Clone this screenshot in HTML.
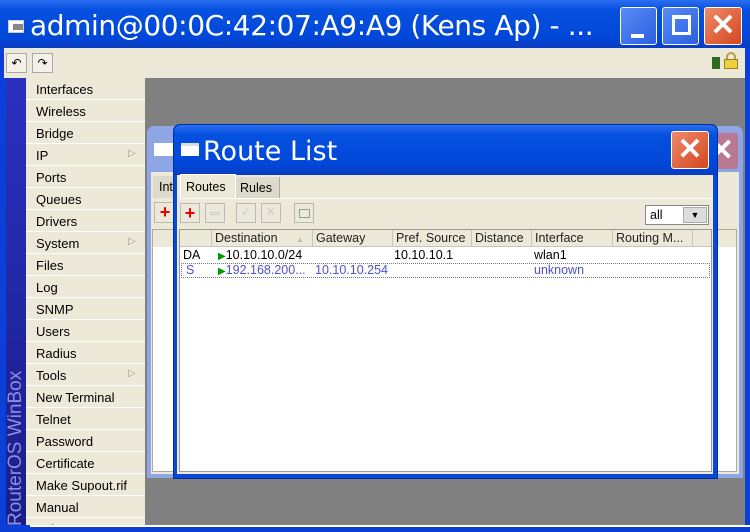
<!DOCTYPE html>
<html><head><style>
*{margin:0;padding:0;box-sizing:border-box}
body{width:750px;height:532px;overflow:hidden;background:#0a3fd8;font-family:"Liberation Sans",sans-serif;position:relative}
.a{position:absolute}
.tb{background:linear-gradient(#2b6ff0,#0650e0 20%,#0047d8 80%,#0a3cc0)}
.menu div{position:absolute;left:0;width:119px;height:22px;border-bottom:1px solid #fff;font-size:13px;padding:4px 0 0 10px;color:#000}
.btn{position:absolute;border:1px solid #fff;border-radius:3px}
.hdr{position:absolute;top:0;height:17px;border-right:1px solid #c8c6bc;font-size:12.5px;padding:1px 0 0 3px;color:#222;white-space:nowrap;overflow:hidden}
.cell{position:absolute;font-size:12.5px;white-space:nowrap}
.tbtn{position:absolute;top:0;width:20px;height:20px;border:1px solid #bcbab0;background:#ebe9dc}
</style></head><body>
<div class="a tb" style="left:0;top:0;width:750px;height:48px"></div>
<div class="a" style="top:20px;left:8px;width:16px;height:13px;background:#fff;border:1px solid #ccc"><div style="margin:3px 0 0 4px;width:10px;height:6px;background:#888"></div></div>
<div class="a" style="left:30px;top:9px;color:#fff;font-size:28px;font-family:'DejaVu Sans',sans-serif;white-space:nowrap;letter-spacing:-0.4px">admin@00:0C:42:07:A9:A9 (Kens Ap) - ...</div>
<div class="btn" style="left:620px;top:7px;width:37px;height:38px;background:linear-gradient(135deg,#5a8cf5,#2a5fe0)"><div class="a" style="left:10px;top:26px;width:13px;height:4px;background:#fff"></div></div>
<div class="btn" style="left:662px;top:7px;width:37px;height:38px;background:linear-gradient(135deg,#5a8cf5,#2a5fe0)"><div class="a" style="left:9px;top:7px;width:19px;height:20px;border:3px solid #fff;border-top-width:4px"></div></div>
<div class="btn" style="left:704px;top:7px;width:38px;height:38px;background:linear-gradient(135deg,#ef8a6a,#d4461e);color:#fff;font-size:30px;text-align:center;line-height:36px;font-weight:bold">✕</div>
<div class="a" style="left:4px;top:48px;width:741px;height:30px;background:#ece9d8"></div>
<div class="a" style="left:6px;top:53px;width:21px;height:20px;border:1px solid #aaa;background:#f4f2e8;font-size:12px;text-align:center;line-height:18px">↶</div>
<div class="a" style="left:32px;top:53px;width:21px;height:20px;border:1px solid #aaa;background:#f4f2e8;font-size:12px;text-align:center;line-height:18px">↷</div>
<div class="a" style="left:712px;top:57px;width:8px;height:12px;background:#2e6a1e"></div>
<div class="a" style="top:52px;height:8px;width:10px;left:726px;border:2px solid #b8a040;border-bottom:none;border-radius:6px 6px 0 0"></div>
<div class="a" style="left:724px;top:59px;width:14px;height:10px;background:#f0d040;border:1px solid #a08020"></div>
<div class="a" style="left:6px;top:78px;width:20px;height:447px;background:linear-gradient(#2a30c0,#1a1e88)"></div>
<div class="a" style="left:6px;top:527px;transform-origin:0 0;transform:rotate(-90deg);white-space:nowrap;color:#8a90e0;font-size:19px;line-height:20px;width:170px;padding-left:1px">RouterOS WinBox</div>
<div class="a menu" style="left:26px;top:78px;width:119px;height:447px;background:#ece9d8;overflow:hidden">
<div style="top:0">Interfaces</div><div style="top:22px">Wireless</div><div style="top:44px">Bridge</div><div style="top:66px">IP<span style="position:absolute;left:102px;color:#999;font-size:10px">▷</span></div><div style="top:88px">Ports</div><div style="top:110px">Queues</div><div style="top:132px">Drivers</div><div style="top:154px">System<span style="position:absolute;left:102px;color:#999;font-size:10px">▷</span></div><div style="top:176px">Files</div><div style="top:198px">Log</div><div style="top:220px">SNMP</div><div style="top:242px">Users</div><div style="top:264px">Radius</div><div style="top:286px">Tools<span style="position:absolute;left:102px;color:#999;font-size:10px">▷</span></div><div style="top:308px">New Terminal</div><div style="top:330px">Telnet</div><div style="top:352px">Password</div><div style="top:374px">Certificate</div><div style="top:396px">Make Supout.rif</div><div style="top:418px">Manual</div><div style="top:440px">Exit</div>
</div>
<div class="a" style="left:145px;top:78px;width:600px;height:447px;background:#808080"></div>
<div class="a" style="top:525px;width:720px;height:2px;background:#fff;left:30px"></div>
<div class="a" style="left:147px;top:126px;width:596px;height:352px;background:#8ea6e6;border-radius:7px 7px 0 0"></div>
<div class="a" style="left:151px;top:172px;width:588px;height:302px;background:#ece9d8"></div>
<div class="a" style="left:154px;top:143px;width:20px;height:13px;background:#fff"></div>
<div class="a" style="left:706px;top:133px;width:32px;height:36px;background:#b87a90;border-radius:3px;color:#fff;font-size:30px;font-weight:bold;text-align:right;line-height:36px;padding-right:4px">✕</div>
<div class="a" style="left:153px;top:176px;width:24px;height:22px;background:#dddacb;font-size:12.5px;padding:4px 0 0 6px">Int</div>
<div class="a" style="left:154px;top:202px;width:22px;height:21px;border:1px solid #bcbab0;color:#e00;font-size:18px;font-weight:bold;text-align:center;line-height:19px">+</div>
<div class="a" style="left:152px;top:229px;width:585px;height:243px;background:#fff;border:1px solid #aaa"></div>
<div class="a" style="left:153px;top:230px;width:583px;height:17px;background:#ece9d8"></div>
<div class="a" style="left:173px;top:124px;width:545px;height:355px;background:#0a48d8;border-radius:7px 7px 0 0;border:1px solid #0030a0"></div>
<div class="a tb" style="left:174px;top:125px;width:543px;height:50px;border-radius:7px 7px 0 0"></div>
<div class="a" style="left:181px;top:143px;width:18px;height:13px;background:#fff;border-top:3px solid #ddd"></div>
<div class="a" style="left:203px;top:136px;color:#fff;font-size:27px;font-family:'DejaVu Sans',sans-serif;white-space:nowrap">Route List</div>
<div class="btn" style="left:671px;top:131px;width:38px;height:38px;background:linear-gradient(135deg,#ef8a6a,#d4461e);color:#fff;font-size:30px;text-align:center;line-height:36px;font-weight:bold">✕</div>
<div class="a" style="left:177px;top:175px;width:536px;height:299px;background:#ece9d8"></div>
<div class="a" style="left:180px;top:174px;width:56px;height:24px;background:#ece9d8;border:1px solid #fff;border-bottom:none;font-size:12.5px;padding:5px 0 0 5px">Routes</div>
<div class="a" style="left:236px;top:177px;width:44px;height:21px;background:#dddacb;border-right:1px solid #aaa;font-size:12.5px;padding:4px 0 0 4px">Rules</div>
<div class="a" style="left:180px;top:198px;width:532px;height:1px;background:#fff"></div>
<div class="a" style="left:180px;top:203px;width:200px;height:22px">
<div class="tbtn" style="left:0;color:#e00;font-size:18px;font-weight:bold;text-align:center;line-height:18px">+</div>
<div class="tbtn" style="left:25px;"><div class="a" style="left:4px;top:8px;width:10px;height:3px;border:1px solid #ccc"></div></div>
<div class="tbtn" style="left:56px;color:#ccc;text-align:center;font-size:13px">✓</div>
<div class="tbtn" style="left:81px;color:#ccc;text-align:center;font-size:13px">✕</div>
<div class="tbtn" style="left:114px;"><div class="a" style="left:4px;top:5px;width:11px;height:9px;border:1px solid #999"></div></div>
</div>
<div class="a" style="left:645px;top:205px;width:64px;height:20px;background:#fff;border:1px solid #888;font-size:12.5px;padding:2px 0 0 4px">all<div class="a" style="left:37px;top:1px;width:24px;height:16px;background:#ddd;border:1px solid #aaa;font-size:9px;text-align:center;line-height:14px">▼</div></div>
<div class="a" style="left:179px;top:229px;width:533px;height:243px;background:#fff;border:1px solid #999">
<div class="a" style="left:0;top:0;width:531px;height:17px;background:#ece9d8;border-bottom:1px solid #c8c6bc"></div>
<div class="hdr" style="left:0;width:32px"></div>
<div class="hdr" style="left:32px;width:101px">Destination <span style="color:#bbb;font-size:8px;margin-left:15px">▲</span></div>
<div class="hdr" style="left:133px;width:80px">Gateway</div>
<div class="hdr" style="left:213px;width:79px">Pref. Source</div>
<div class="hdr" style="left:292px;width:60px">Distance</div>
<div class="hdr" style="left:352px;width:81px">Interface</div>
<div class="hdr" style="left:433px;width:80px">Routing M...</div>
<div class="cell" style="left:3px;top:18px">DA</div>
<div class="cell" style="left:38px;top:18px"><span style="color:#090;font-size:10px">▶</span>10.10.10.0/24</div>
<div class="cell" style="left:214px;top:18px">10.10.10.1</div>
<div class="cell" style="left:354px;top:18px">wlan1</div>
<div class="a" style="left:1px;top:33px;width:529px;height:15px;border:1px dotted #777"></div>
<div class="cell" style="left:6px;top:33px;color:#5050d0">S</div>
<div class="cell" style="left:38px;top:33px;color:#5050d0"><span style="color:#090;font-size:10px">▶</span>192.168.200...</div>
<div class="cell" style="left:135px;top:33px;color:#5050d0">10.10.10.254</div>
<div class="cell" style="left:354px;top:33px;color:#5050d0">unknown</div>
</div>
</body></html>
